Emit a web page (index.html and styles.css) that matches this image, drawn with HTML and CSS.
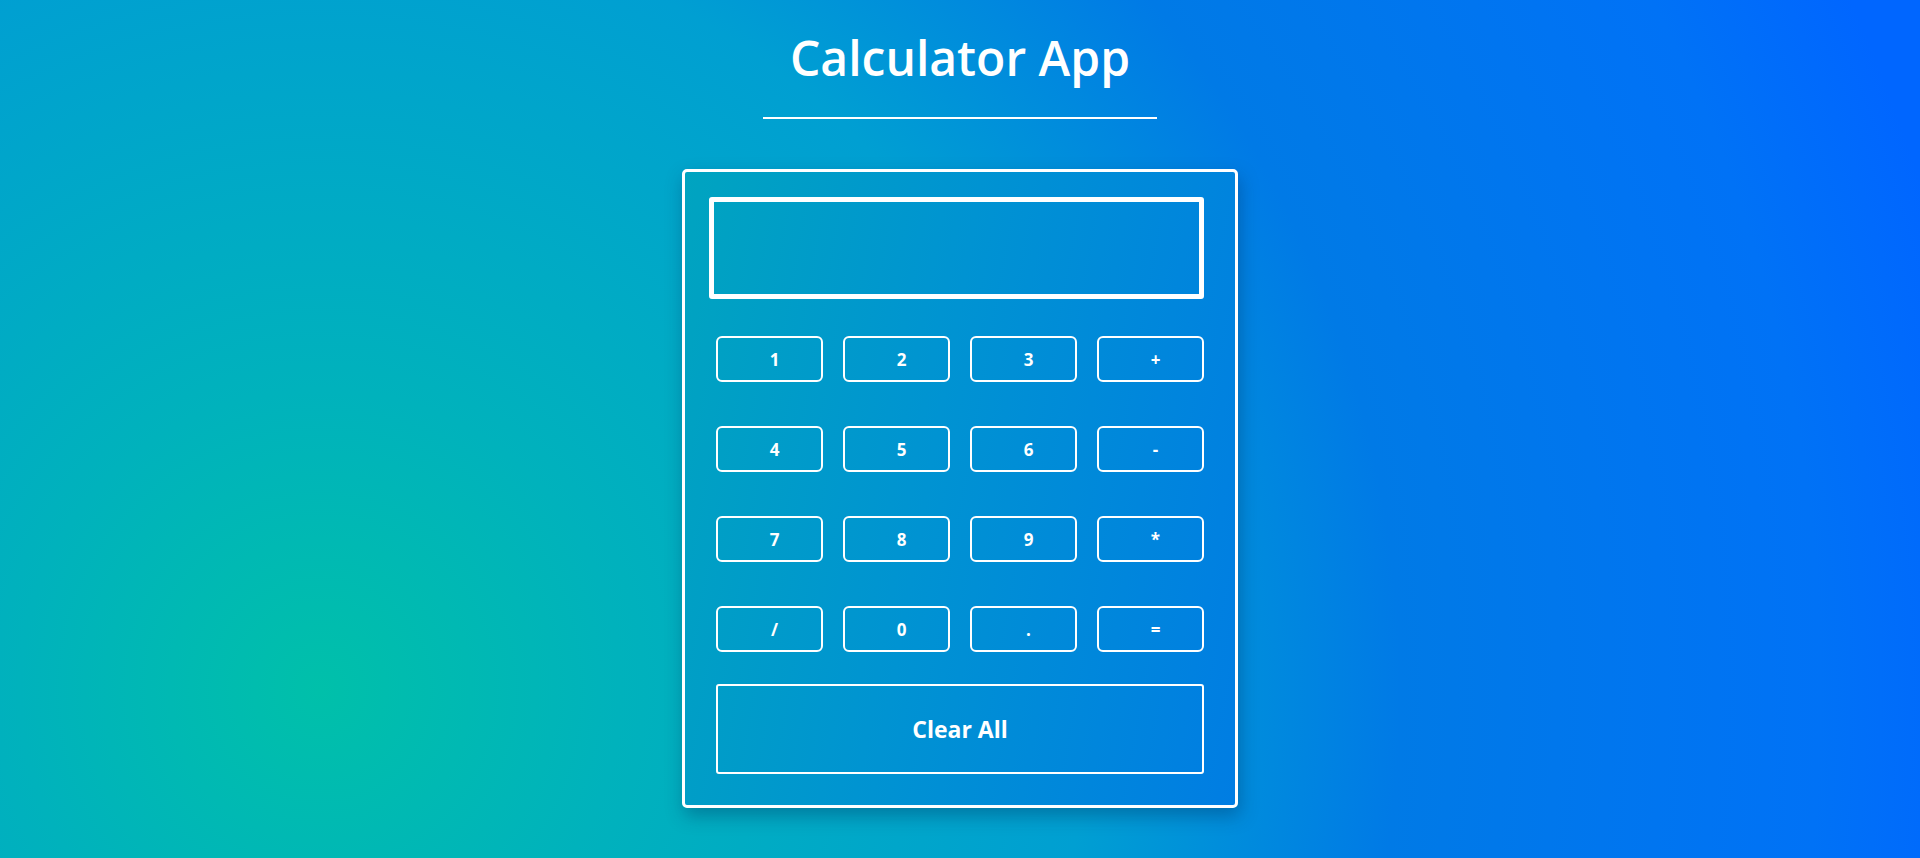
FILE: index.html
```html
<!DOCTYPE html>
<html lang="en">
<head>
<meta charset="utf-8">
<title>Calculator App</title>
<link rel="stylesheet" href="styles.css">
</head>
<body>
<main class="page">
  <h1 class="title">Calculator App</h1>
  <div class="rule"></div>
  <section class="calc">
    <div class="display"></div>
    <div class="keys">
      <button class="key">1</button>
      <button class="key">2</button>
      <button class="key">3</button>
      <button class="key">+</button>
      <button class="key">4</button>
      <button class="key">5</button>
      <button class="key">6</button>
      <button class="key">-</button>
      <button class="key">7</button>
      <button class="key">8</button>
      <button class="key">9</button>
      <button class="key">*</button>
      <button class="key">/</button>
      <button class="key">0</button>
      <button class="key">.</button>
      <button class="key">=</button>
    </div>
    <button class="clear">Clear All</button>
  </section>
</main>
</body>
</html>
```

FILE: styles.css
```css
html, body {
  margin: 0;
  padding: 0;
}

body {
  height: 858px;
  overflow: hidden;
  font-family: "Open Sans", "Noto Sans", "Liberation Sans", sans-serif;
  color: #ffffff;
  background: radial-gradient(circle at 320px 690px, #00c0aa 0px, #00b2bc 300px, #009fd2 770px, #007ae6 1080px, #0072f6 1500px, #0066ff 1680px);
}

.page {
  display: flex;
  flex-direction: column;
  align-items: center;
  padding-top: 34px;
}

.title {
  margin: 0;
  height: 48px;
  font-size: 48px;
  line-height: 48px;
  font-weight: 600;
  letter-spacing: 0;
}

.rule {
  width: 394px;
  height: 2px;
  margin-top: 35px;
  background: #ffffff;
}

.calc {
  box-sizing: border-box;
  width: 556px;
  height: 639px;
  margin-top: 50px;
  padding: 25px 31px 31px 24px;
  border: 3px solid #ffffff;
  border-radius: 5px;
  background: linear-gradient(100deg, #00a4c0 0%, #0093d2 45%, #007de3 100%);
  box-shadow: 2px 8px 18px rgba(0, 40, 90, 0.35);
  display: flex;
  flex-direction: column;
}

.display {
  box-sizing: border-box;
  width: 495px;
  height: 102px;
  border: 5px solid #ffffff;
  border-radius: 3px;
}

.keys {
  margin-top: 37px;
  margin-left: 7px;
  display: grid;
  grid-template-columns: repeat(4, 107px);
  grid-auto-rows: 46px;
  column-gap: 20px;
  row-gap: 44px;
}

.key {
  box-sizing: border-box;
  margin: 0;
  padding: 0 0 0 10px;
  border: 2px solid #ffffff;
  border-radius: 6px;
  background: transparent;
  color: #ffffff;
  font-family: "Open Sans", "Noto Sans", sans-serif;
  font-size: 17px;
  font-weight: 700;
}

.clear {
  box-sizing: border-box;
  margin: 32px 0 0 7px;
  width: 488px;
  height: 90px;
  padding: 0;
  border: 2px solid #ffffff;
  border-radius: 3px;
  background: transparent;
  color: #ffffff;
  font-family: "Open Sans", "Noto Sans", sans-serif;
  font-size: 23px;
  font-weight: 700;
}
```
